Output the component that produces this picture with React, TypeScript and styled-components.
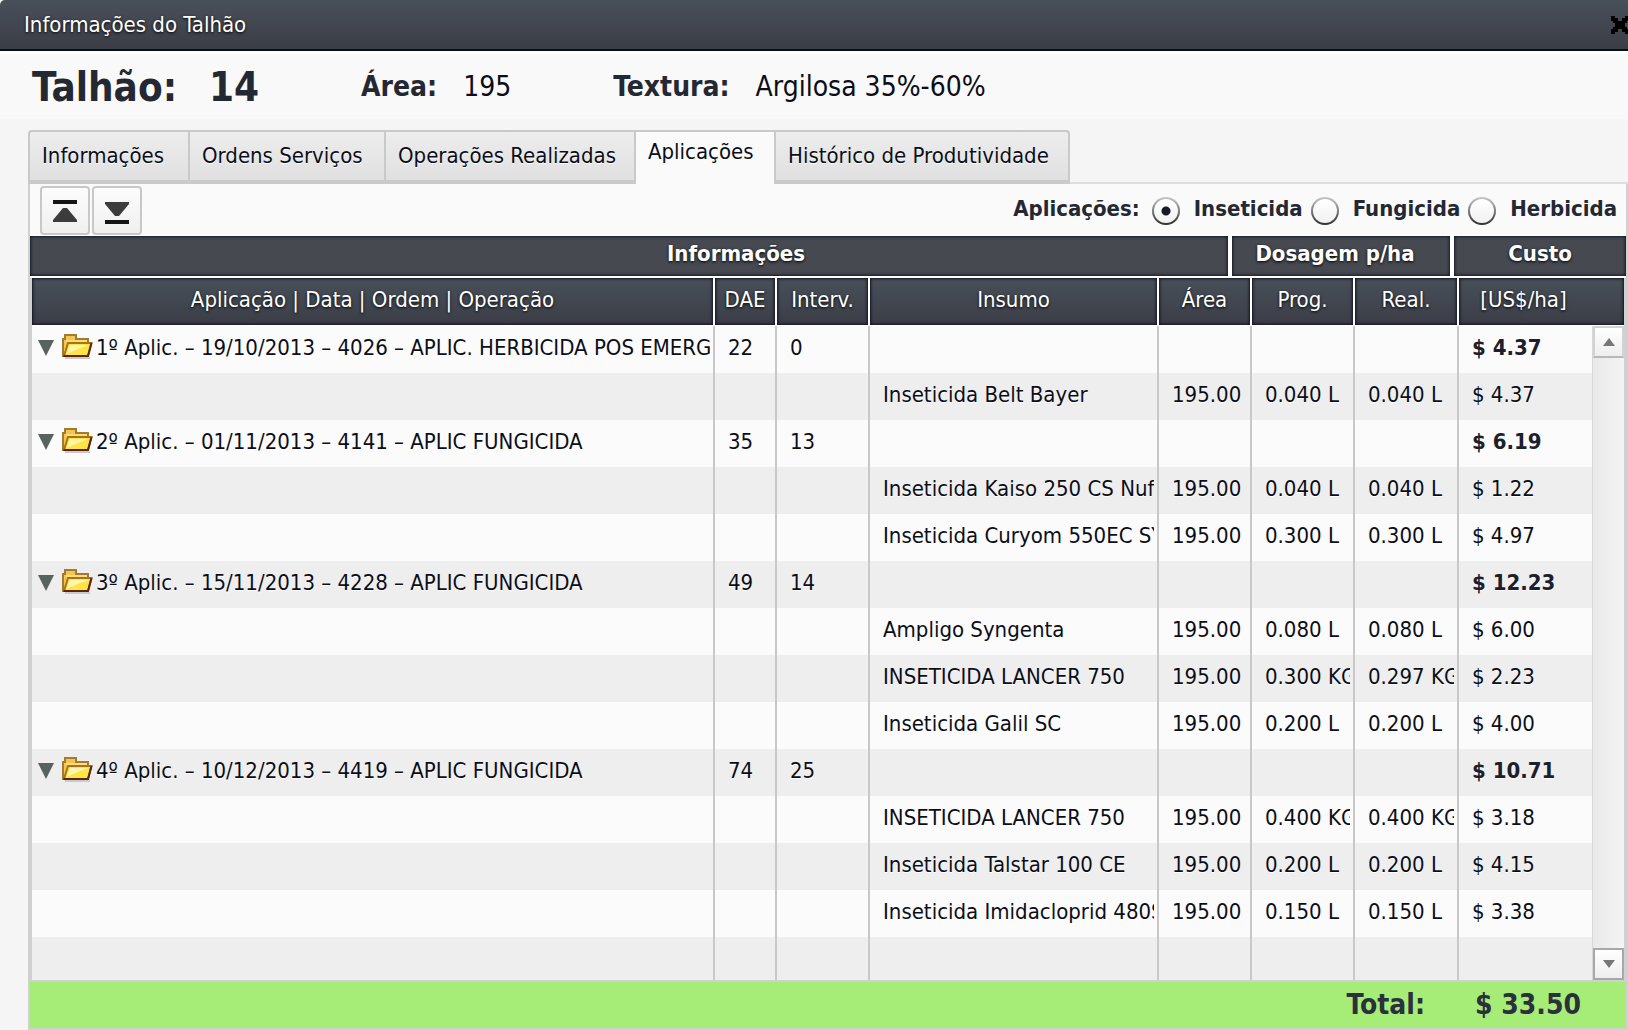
import React, { useState } from "react";
import styled, { createGlobalStyle, css } from "styled-components";

const FONT = '"DejaVu Sans Condensed", Tahoma, Verdana, sans-serif';

const GlobalStyle = createGlobalStyle`
  * { box-sizing: border-box; }
  body {
    margin: 0;
    background: #f5f5f5;
    color: #0b0e18;
    font: 22px/28px ${FONT};
    overflow-x: hidden;
  }
  button, input { font: inherit; color: inherit; margin: 0; padding: 0; }
  h1, h2, dl, dt, dd { margin: 0; font: inherit; }
`;

/* Window chrome */

const Window = styled.main`
  display: flex;
  flex-direction: column;
`;

const TitleBar = styled.header`
  display: flex;
  align-items: center;
  justify-content: space-between;
  height: 51px;
  padding-left: 24px;
  overflow: hidden;
  border-bottom: 2px solid #0a0d15;
  border-top-left-radius: 5px;
  background: linear-gradient(#48505a, #3b3d46);
  color: #fff;
  text-shadow: 0 1px 3px #000;
`;

const CloseButton = styled.button`
  display: flex;
  width: 20px;
  height: 20px;
  margin-right: -3px;
  border: 0;
  background: none;
  cursor: pointer;
`;

/* Field summary */

const Summary = styled.dl`
  display: flex;
  align-items: center;
  gap: 102px;
  height: 68px;
  padding: 0 32px;
  margin-bottom: 11px;
  border-top: 3px solid #fff;
  background: #f9f9f9;
`;

const Fact = styled.div<{ $large?: boolean }>`
  display: flex;
  align-items: center;
  gap: ${(p) => (p.$large ? 32 : 26)}px;
  font-size: ${(p) => (p.$large ? 40 : 28)}px;
  line-height: 48px;
  white-space: nowrap;

  dt { font-weight: 700; color: #232833; }
  dd { font-weight: ${(p) => (p.$large ? 700 : 400)}; color: ${(p) => (p.$large ? "#232833" : "#0b0e18")}; }
`;

/* Tabs */

const TabList = styled.div`
  display: flex;
  height: 54px;
  margin-left: 28px;
  box-shadow: inset 0 -2px #dedede;
`;

const Tab = styled.button<{ $width: number; $active: boolean }>`
  width: ${(p) => p.$width}px;
  padding: 0 0 0 12px;
  border: 2px solid #c9c9c9;
  border-right-width: 0;
  border-bottom: 4px solid #cacaca;
  background: linear-gradient(#ededed, #e0e0e0);
  text-align: left;
  white-space: nowrap;
  text-shadow: 0 1px #fff;
  cursor: pointer;

  &:first-child { border-top-left-radius: 4px; }
  &:last-child { border-right-width: 2px; border-top-right-radius: 4px; }

  ${(p) =>
    p.$active &&
    css`
      padding-bottom: 12px;
      border-bottom: 0;
      background: #fafafa;
    `}
`;

/* Panel */

const Panel = styled.section`
  margin-left: 28px;
  border: solid #d0d0d0;
  border-width: 0 2px 2px;
`;

const Toolbar = styled.div`
  display: flex;
  align-items: flex-start;
  justify-content: space-between;
  height: 52px;
  padding: 2px 9px 0 10px;
  background: #fafafa;
  border-bottom: 1px solid #fff;
`;

const ToolGroup = styled.div`
  display: flex;
  gap: 2px;
`;

const ToolButton = styled.button`
  display: flex;
  align-items: center;
  justify-content: center;
  width: 50px;
  height: 49px;
  padding-top: 2px;
  border: 2px solid #c8c8c8;
  border-radius: 4px;
  background: linear-gradient(#fcfcfc, #f0f0f0);
  cursor: pointer;
`;

const Filter = styled.div`
  display: flex;
  align-items: center;
  height: 45px;
  gap: 8px;
  font-weight: 700;
  color: #232833;
`;

const FilterTitle = styled.span`
  margin-right: 4px;
`;

const RadioLabel = styled.label`
  display: flex;
  align-items: center;
  gap: 14px;
`;

const Radio = styled.input`
  appearance: none;
  width: 28px;
  height: 28px;
  margin-top: 4px;
  border: 2px solid transparent;
  border-radius: 50%;
  background:
    linear-gradient(#ffffff, #f1f1f1) padding-box,
    linear-gradient(#c9c9c9, #2e2e2e) border-box;

  &:checked {
    background:
      radial-gradient(circle, #151a24 4px, transparent 5px) padding-box,
      linear-gradient(#ffffff, #f1f1f1) padding-box,
      linear-gradient(#c9c9c9, #2e2e2e) border-box;
  }
`;

/* Grid */

const GroupRow = styled.div`
  display: flex;
  gap: 4px;
  background: #fff;
  padding-bottom: 2px;
`;

const GroupCell = styled.h2<{ $width?: number; $inset?: number }>`
  ${(p) => (p.$width ? `flex: none; width: ${p.$width}px;` : "flex: 1; padding-left: 214px;")}
  ${(p) => p.$inset && `padding-right: ${p.$inset}px;`}
  height: 40px;
  line-height: 36px;
  background: #464950;
  box-shadow: inset 0 0 3px 1px #141926;
  color: #fff;
  font-weight: 700;
  text-align: center;
  text-shadow: 0 1px 3px #000;
`;

const GridFrame = styled.div`
  border: solid #d0d0d0;
  border-width: 0 2px;
`;

const Table = styled.table`
  width: 100%;
  table-layout: fixed;
  border-collapse: separate;
  border-spacing: 0;
  text-shadow: 0 1px #fff;
`;

const HeadCell = styled.th`
  height: 48px;
  padding: 0 0 4px;
  border-right: 2px solid #fff;
  border-bottom: 1px solid #fff;
  background: linear-gradient(#48505a, #3b3d46) padding-box;
  box-shadow: inset 0 0 3px 1px #10141f;
  color: #fff;
  font-weight: 400;
  text-shadow: 0 1px 3px #000;

  &:last-child { padding-right: 36px; border-right: 0; }
`;

const BodyArea = styled.div`
  display: flex;
`;

const BodyTable = styled(Table)`
  flex: 1;
  min-width: 0;
  width: 0;
`;

const Row = styled.tr<{ $short?: boolean }>`
  height: ${(p) => (p.$short ? 43 : 47)}px;
  background: #fbfbfb;

  &:nth-child(even) { background: #eeeeee; }
`;

const Cell = styled.td<{ $bold?: boolean; $tree?: boolean }>`
  padding: 0 3px 4px ${(p) => (p.$tree ? 6 : 13)}px;
  border-right: 2px solid #c8c8c8;
  overflow: hidden;
  white-space: nowrap;
  font-weight: ${(p) => (p.$bold ? 700 : 400)};
  color: ${(p) => (p.$bold ? "#1b202b" : "#0b0e18")};

  &:last-child { border-right: 0; }
`;

const Clip = styled.div`
  overflow: hidden;
`;

const TreeNode = styled.div`
  display: flex;
  align-items: center;
  overflow: hidden;
`;

const Toggle = styled.button`
  display: flex;
  flex: none;
  margin-right: 8px;
  border: 0;
  background: none;
  cursor: pointer;
`;

const FolderSvg = styled.svg`
  flex: none;
  margin-right: 3px;
`;

const ScrollBar = styled.div`
  display: flex;
  flex-direction: column;
  justify-content: space-between;
  flex: none;
  width: 32px;
  border-left: 1px solid #d8d8d8;
  background: linear-gradient(90deg, #e9e9e9, #f4f4f4);
`;

const ScrollButton = styled.button<{ $dark?: boolean }>`
  display: flex;
  align-items: center;
  justify-content: center;
  height: 32px;
  border: 2px solid ${(p) => (p.$dark ? "#a8a8a8" : "#d2d2d2")};
  border-bottom-color: ${(p) => (p.$dark ? "#a8a8a8" : "#b8b8b8")};
  background: linear-gradient(#ffffff, #eeeeee);
`;

const Footer = styled.footer`
  display: flex;
  align-items: center;
  justify-content: flex-end;
  gap: 50px;
  height: 48px;
  padding: 0 45px 0 0;
  border-top: 2px solid #d0d0d0;
  background: #a6ed78;
  color: #2b303c;
  font-size: 28px;
  font-weight: 700;
`;

/* Icons */

const CloseIcon = () => (
  <svg width="20" height="20" viewBox="0 0 20 20" aria-hidden="true">
    <path d="M0 1h4v2h3v3h4V3h3V1h4v5h-2v2h-2v4h2v2h2v5h-4v-2h-3v-3H7v3H4v2H0v-5h2v-2h2V8H2V6H0z" fill="#000" />
  </svg>
);

const CollapseIcon = () => (
  <svg width="24" height="24" viewBox="0 0 24 24" aria-hidden="true">
    <path d="M0 0h24v4H0z" fill="#151515" />
    <path d="M10 8h4l10 12v2H0v-2z" fill="#3c3c3c" />
  </svg>
);

const ExpandIcon = () => (
  <svg width="24" height="24" viewBox="0 0 24 24" aria-hidden="true">
    <path d="M0 2h24v2L14 16h-4L0 4z" fill="#3c3c3c" />
    <path d="M0 20h24v4H0z" fill="#151515" />
  </svg>
);

const ToggleIcon = () => (
  <svg width="16" height="16" viewBox="0 0 16 16" aria-hidden="true">
    <path d="M0 0h16L8 16z" fill="#586360" />
  </svg>
);

const FolderIcon = () => (
  <FolderSvg width="31" height="28" viewBox="0 0 31 28" aria-hidden="true">
    <path d="M3 23h25v2H3z" fill="#c9c9cf" />
    <path d="M1 22V5h2V1h11v4h12v5h-2v11z" fill="#f5c552" stroke="#a27a30" strokeWidth="2" />
    <path d="M4 7h21" stroke="#ffdc7c" strokeWidth="2" />
    <path d="M2 22L6 9H29.500L26 22z" fill="#ffe445" stroke="#a8741b" strokeWidth="2" />
    <path d="M4.500 20L8 11H27L18 14z" fill="#fff6ac" />
    <path d="M29.500 9L26 22H1.500" fill="none" stroke="#5d2408" strokeWidth="2" />
  </FolderSvg>
);

const ArrowIcon = ({ down }: { down?: boolean }) => (
  <svg width="12" height="8" viewBox="0 0 12 8" aria-hidden="true">
    <path d={down ? "M0 0h12L6 8z" : "M0 8h12L6 0z"} fill="#777" />
  </svg>
);

/* Data */

const TABS = [
  { label: "Informações", width: 160 },
  { label: "Ordens Serviços", width: 196 },
  { label: "Operações Realizadas", width: 250 },
  { label: "Aplicações", width: 140 },
  { label: "Histórico de Produtividade", width: 296 },
];

const KINDS = ["Inseticida", "Fungicida", "Herbicida"];

const COLUMNS = ["Aplicação | Data | Ordem | Operação", "DAE", "Interv.", "Insumo", "Área", "Prog.", "Real.", "[US$/ha]"];

type Item = [name: string, prog: string, real: string, cost: string];

type Application = { title: string; dae: string; interval: string; cost: string; items: Item[] };

const APPLICATIONS: Application[] = [
  {
    title: "1º Aplic. – 19/10/2013 – 4026 – APLIC. HERBICIDA POS EMERG",
    dae: "22",
    interval: "0",
    cost: "$ 4.37",
    items: [["Inseticida Belt Bayer", "0.040 L", "0.040 L", "$ 4.37"]],
  },
  {
    title: "2º Aplic. – 01/11/2013 – 4141 – APLIC FUNGICIDA",
    dae: "35",
    interval: "13",
    cost: "$ 6.19",
    items: [
      ["Inseticida Kaiso 250 CS Nufa", "0.040 L", "0.040 L", "$ 1.22"],
      ["Inseticida Curyom 550EC SY", "0.300 L", "0.300 L", "$ 4.97"],
    ],
  },
  {
    title: "3º Aplic. – 15/11/2013 – 4228 – APLIC FUNGICIDA",
    dae: "49",
    interval: "14",
    cost: "$ 12.23",
    items: [
      ["Ampligo Syngenta", "0.080 L", "0.080 L", "$ 6.00"],
      ["INSETICIDA LANCER 750", "0.300 KG", "0.297 KG", "$ 2.23"],
      ["Inseticida Galil SC", "0.200 L", "0.200 L", "$ 4.00"],
    ],
  },
  {
    title: "4º Aplic. – 10/12/2013 – 4419 – APLIC FUNGICIDA",
    dae: "74",
    interval: "25",
    cost: "$ 10.71",
    items: [
      ["INSETICIDA LANCER 750", "0.400 KG", "0.400 KG", "$ 3.18"],
      ["Inseticida Talstar 100 CE", "0.200 L", "0.200 L", "$ 4.15"],
      ["Inseticida Imidacloprid 480S", "0.150 L", "0.150 L", "$ 3.38"],
    ],
  },
];

const Col = styled.col<{ $width?: number }>`
  width: ${(p) => (p.$width ? `${p.$width}px` : "auto")};
`;

const Columns = ({ last }: { last: number }) => (
  <colgroup>
    <Col />
    {[62, 93, 289, 93, 103, 104, last].map((width, i) => (
      <Col key={i} $width={width} />
    ))}
  </colgroup>
);

const ApplicationRows = ({ app }: { app: Application }) => (
  <>
    <Row>
      <Cell $tree>
        <TreeNode>
          <Toggle aria-label="Recolher">
            <ToggleIcon />
          </Toggle>
          <FolderIcon />
          {app.title}
        </TreeNode>
      </Cell>
      <Cell>{app.dae}</Cell>
      <Cell>{app.interval}</Cell>
      <Cell />
      <Cell />
      <Cell />
      <Cell />
      <Cell $bold>{app.cost}</Cell>
    </Row>
    {app.items.map(([name, prog, real, cost]) => (
      <Row key={name}>
        <Cell />
        <Cell />
        <Cell />
        <Cell><Clip>{name}</Clip></Cell>
        <Cell>195.00</Cell>
        <Cell><Clip>{prog}</Clip></Cell>
        <Cell><Clip>{real}</Clip></Cell>
        <Cell>{cost}</Cell>
      </Row>
    ))}
  </>
);

export default function App() {
  const [tab, setTab] = useState("Aplicações");
  const [kind, setKind] = useState("Inseticida");

  return (
    <>
      <GlobalStyle />
      <Window>
        <TitleBar>
          <h1>Informações do Talhão</h1>
          <CloseButton aria-label="Fechar">
            <CloseIcon />
          </CloseButton>
        </TitleBar>

        <Summary>
          <Fact $large><dt>Talhão:</dt><dd>14</dd></Fact>
          <Fact><dt>Área:</dt><dd>195</dd></Fact>
          <Fact><dt>Textura:</dt><dd>Argilosa 35%-60%</dd></Fact>
        </Summary>

        <TabList role="tablist">
          {TABS.map(({ label, width }) => (
            <Tab
              key={label}
              role="tab"
              aria-selected={label === tab}
              $active={label === tab}
              $width={width}
              onClick={() => setTab(label)}
            >
              {label}
            </Tab>
          ))}
        </TabList>

        <Panel>
          <Toolbar>
            <ToolGroup>
              <ToolButton aria-label="Recolher tudo"><CollapseIcon /></ToolButton>
              <ToolButton aria-label="Expandir tudo"><ExpandIcon /></ToolButton>
            </ToolGroup>
            <Filter role="radiogroup" aria-labelledby="filter-title">
              <FilterTitle id="filter-title">Aplicações:</FilterTitle>
              {KINDS.map((name) => (
                <RadioLabel key={name}>
                  <Radio type="radio" name="kind" checked={kind === name} onChange={() => setKind(name)} />
                  {name}
                </RadioLabel>
              ))}
            </Filter>
          </Toolbar>

          <GroupRow>
            <GroupCell>Informações</GroupCell>
            <GroupCell $width={218} $inset={12}>Dosagem p/ha</GroupCell>
            <GroupCell $width={172}>Custo</GroupCell>
          </GroupRow>

          <GridFrame>
            <Table>
              <Columns last={165} />
              <thead>
                <tr>
                  {COLUMNS.map((name) => (
                    <HeadCell key={name} scope="col">{name}</HeadCell>
                  ))}
                </tr>
              </thead>
            </Table>
            <BodyArea>
              <BodyTable>
                <Columns last={133} />
                <tbody>
                  {APPLICATIONS.map((app) => (
                    <ApplicationRows key={app.title} app={app} />
                  ))}
                  <Row $short>
                    {COLUMNS.map((name) => (
                      <Cell key={name} />
                    ))}
                  </Row>
                </tbody>
              </BodyTable>
              <ScrollBar>
                <ScrollButton aria-label="Rolar para cima"><ArrowIcon /></ScrollButton>
                <ScrollButton $dark aria-label="Rolar para baixo"><ArrowIcon down /></ScrollButton>
              </ScrollBar>
            </BodyArea>
          </GridFrame>

          <Footer>
            <span>Total:</span>
            <span>$ 33.50</span>
          </Footer>
        </Panel>
      </Window>
    </>
  );
}
